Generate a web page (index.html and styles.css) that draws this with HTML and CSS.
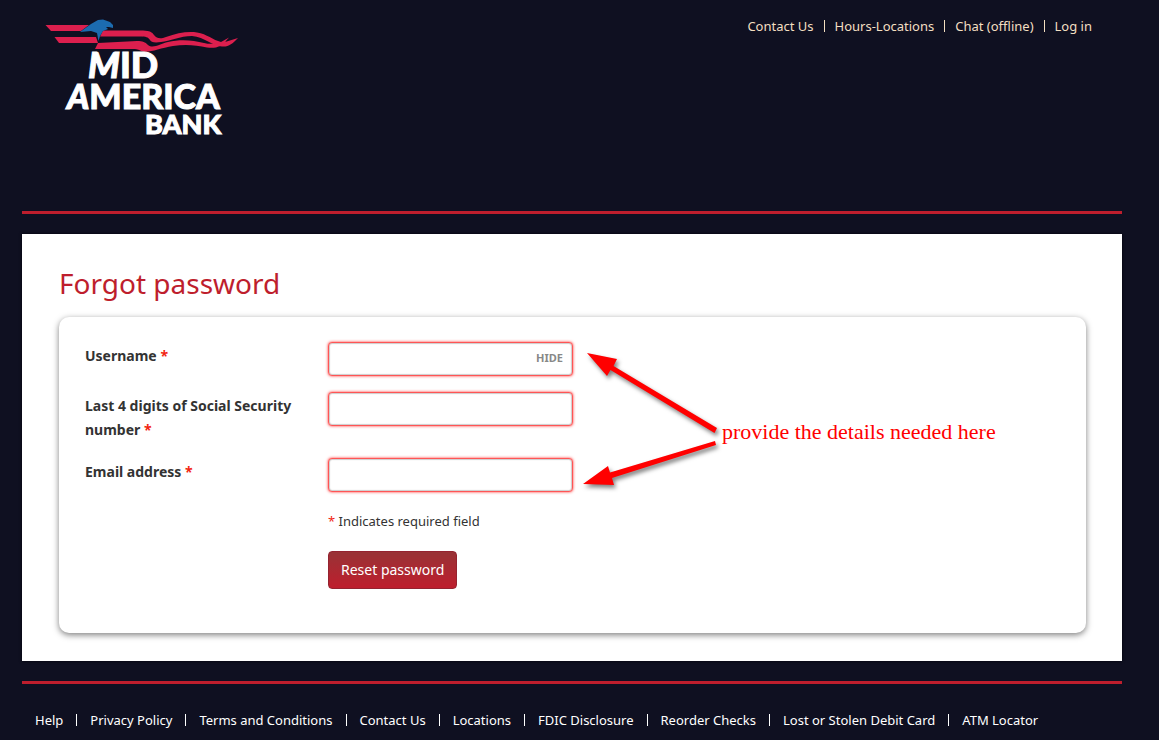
FILE: index.html
```html
<!DOCTYPE html>
<html lang="en">
<head>
    <meta charset="UTF-8">
    <meta name="viewport" content="width=device-width, initial-scale=1.0">
    <title>Forgot password</title>
    <link rel="stylesheet" href="styles.css">
</head>
<body>
    <div class="page">
        <header class="header">
            <a href="#" class="logo" aria-label="Mid America Bank">
                <svg width="210" height="130" viewBox="40 10 210 130">
                    <!-- Stripes -->
                    <g fill="#dc1f4e">
                        <path d="M45.500 25H89L81 31H51Z"/>
                        <path d="M54.500 37H96L98 43H59Z"/>
                        <path d="M103 30.500H143C150 31 152 32 154 35C157 39 161 39 166 37C177 33 188 31 197 32.500C207 34 213 40 221 42L229 37.500L225 42L238 38C232 44 229 47 222 46.500C212 46 205 37 192 36C180 36 170 41 161 42C154 43 151 42 150 40C148 37 146 36.500 140 36.500H100Z"/>
                        <path d="M98 43L137 41C143 41 145 42 148 45C153 49 160 44 168 42C180 39 193 40 204 43C212 45 220 43 226 41L220 46C216 48 212 48 207 47.500C196 45 185 44 173 46C160 48 150 53 143 51.500C138 50 139 49 133 49H95Z"/>
                    </g>
                    <!-- Eagle -->
                    <path fill="#1c6cb0" d="M80 32L91 24L98 20L103 19.500L110 22L113 25V28L109 27L106 27L108 29L103 31L100 36L98.500 41L97 33L91 31Z"/>
                    <!-- Name -->
                    <g class="logo-text">
                        <text x="88" y="78" font-size="36"><tspan font-style="italic">M</tspan>ID</text>
                        <text x="67" y="109" font-size="34"><tspan font-style="italic">A</tspan>MERICA</text>
                        <text x="145" y="134" font-size="27">BANK</text>
                    </g>
                </svg>
            </a>
            <nav>
                <ul class="links top-links">
                    <li><a href="#">Contact Us</a></li>
                    <li><a href="#">Hours-Locations</a></li>
                    <li><a href="#">Chat (offline)</a></li>
                    <li><a href="#">Log in</a></li>
                </ul>
            </nav>
        </header>

        <main class="content">
            <h1>Forgot password</h1>
            <div class="card">
                <form class="form">
                    <label for="username">Username <span class="required">*</span></label>
                    <div class="field">
                        <input type="text" id="username">
                        <button type="button" class="hide">HIDE</button>
                    </div>

                    <label for="ssn">Last 4 digits of Social Security number <span class="required">*</span></label>
                    <div class="field"><input type="text" id="ssn"></div>

                    <label for="email">Email address <span class="required">*</span></label>
                    <div class="field"><input type="email" id="email"></div>

                    <p class="note"><span class="required">*</span> Indicates required field</p>
                    <button type="submit" class="submit">Reset password</button>
                </form>

                <div class="callout">
                    <svg width="142" height="174" viewBox="580 345 142 174">
                        <g fill="#ff0000">
                            <path d="M587 353L617 359L613.500 366L717 428L714.500 433L610.500 370L607 376Z"/>
                            <path d="M583 484L608 466L610 472.500L715 441L716 445L612 478L614 485Z"/>
                        </g>
                    </svg>
                    <p>provide the details needed here</p>
                </div>
            </div>
        </main>

        <footer class="footer">
            <ul class="links">
                <li><a href="#">Help</a></li>
                <li><a href="#">Privacy Policy</a></li>
                <li><a href="#">Terms and Conditions</a></li>
                <li><a href="#">Contact Us</a></li>
                <li><a href="#">Locations</a></li>
                <li><a href="#">FDIC Disclosure</a></li>
                <li><a href="#">Reorder Checks</a></li>
                <li><a href="#">Lost or Stolen Debit Card</a></li>
                <li><a href="#">ATM Locator</a></li>
            </ul>
        </footer>
    </div>
</body>
</html>
```
FILE: styles.css
```css
* {
    box-sizing: border-box;
}
body {
    background-color: #0f1021;
    color: #333;
    font-family: "Noto Sans", sans-serif;
    font-size: 13px;
    line-height: 24px;
    margin: 0;
}
h1, p, ul {
    margin: 0;
    padding: 0;
}
.page {
    padding: 0 37px 0 22px;
}
.header {
    display: flex;
    justify-content: space-between;
    align-items: flex-start;
    min-height: 214px;
    padding: 10px 30px 0 18px;
    border-bottom: 3px solid #be1e2d;
}
.logo svg {
    display: block;
}
.logo-text {
    fill: #fff;
    stroke: #fff;
    stroke-width: 1px;
    font-family: Lato, sans-serif;
    font-weight: 900;
}
.links {
    display: flex;
    flex-wrap: wrap;
    list-style: none;
}
.links li {
    display: flex;
    align-items: center;
}
.links li + li::before {
    content: "";
    width: 1px;
    height: 12px;
    margin: 0 13px;
    background-color: #fff;
}
.links a {
    color: #fff;
    text-decoration: none;
}
.top-links {
    padding-top: 4px;
}
.top-links li + li::before {
    margin: 0 10px;
    background-color: #f3dfc1;
}
.top-links a {
    color: #f3dfc1;
}
.content {
    background-color: #fff;
    margin: 20px 0;
    padding: 31px 36px 28px 37px;
    box-shadow: 0 0 3px #00000a;
}
h1 {
    color: #be1e2d;
    font-size: 28px;
    font-weight: 400;
    line-height: 36px;
    margin-bottom: 16px;
}
.card {
    position: relative;
    padding: 25px 26px 44px;
    border-radius: 10px;
    box-shadow: 0 2px 6px rgba(0, 0, 0, 0.5);
}
.form {
    display: grid;
    grid-template-columns: 225px 245px;
    column-gap: 18px;
    row-gap: 16px;
}
.form label {
    padding-top: 2px;
    font-size: 14px;
    font-weight: 700;
}
.required {
    color: #f22613;
}
.field {
    position: relative;
}
.field input {
    display: block;
    width: 100%;
    height: 34px;
    padding: 4px 10px;
    border: 1px solid #f55;
    border-radius: 4px;
    box-shadow: 0 0 3px #f33, inset 0 0 1px 1px #ccc;
    font: inherit;
}
.hide {
    position: absolute;
    top: 4px;
    right: 10px;
    padding: 0;
    border: 0;
    background: none;
    color: #888;
    font: inherit;
    font-size: 11px;
    font-weight: 700;
}
.note, .submit {
    grid-column: 2;
    justify-self: start;
}
.note {
    padding: 1px 0 2px;
}
.submit {
    height: 38px;
    padding: 0 12px;
    border: 1px solid #942330;
    border-radius: 4px;
    background: linear-gradient(#983336, #be1e2d);
    color: #fff;
    font: inherit;
    font-size: 14px;
}
/* Note and arrows lie over the free side of the card */
.callout {
    position: absolute;
    top: 28px;
    left: 521px;
    display: flex;
    align-items: center;
    color: #ff0000;
    font-family: "Liberation Serif", serif;
    font-size: 22px;
    pointer-events: none;
}
.callout svg {
    filter: drop-shadow(2px 3px 2px rgba(0, 0, 0, 0.5));
}
.footer {
    border-top: 3px solid #be1e2d;
    padding: 24px 13px 8px;
}
```
